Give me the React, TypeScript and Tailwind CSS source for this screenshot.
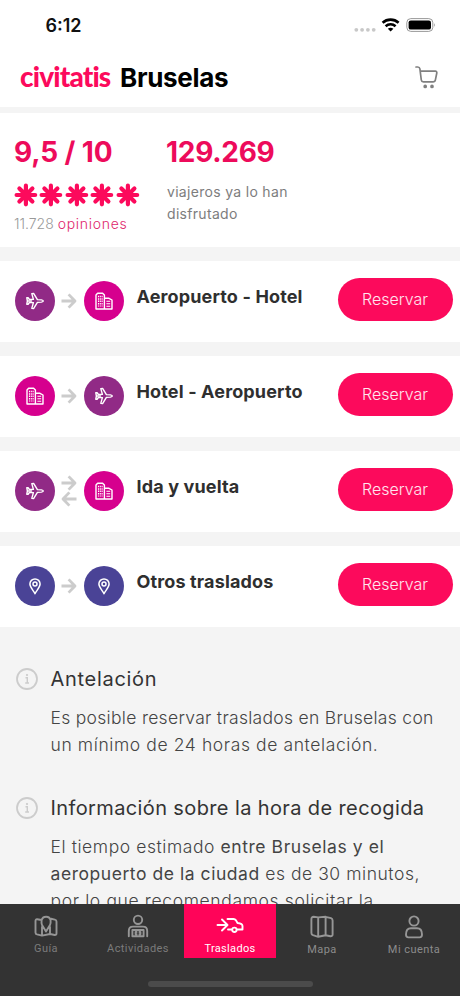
import React from "react";

type Stop = "airport" | "hotel" | "place";

interface Transfer {
  title: string;
  from: Stop;
  to: Stop;
  roundTrip?: boolean;
}

const TRANSFERS: Transfer[] = [
  { title: "Aeropuerto - Hotel", from: "airport", to: "hotel" },
  { title: "Hotel - Aeropuerto", from: "hotel", to: "airport" },
  { title: "Ida y vuelta", from: "airport", to: "hotel", roundTrip: true },
  { title: "Otros traslados", from: "place", to: "place" },
];

const STOP_COLORS: Record<Stop, string> = {
  airport: "bg-[#912a86]",
  hotel: "bg-[#d6008e]",
  place: "bg-[#4a4396]",
};

const PlaneIcon = () => (
  <svg className="h-5 w-5" viewBox="0 0 20 20" fill="none" stroke="white" strokeWidth="1.4" strokeLinejoin="round" strokeLinecap="round">
    <path d="M12.4 8.6 L16.4 8.9 Q18.3 9.3 18.3 10 Q18.3 10.7 16.4 11.1 L12.4 11.4 L8.6 17.6 L6.8 17.4 L8.4 11.6 L4.4 11.5 L3.1 13.2 L1.8 13.2 L2.4 10 L1.8 6.8 L3.1 6.8 L4.4 8.5 L8.4 8.4 L6.8 2.6 L8.6 2.4 Z" />
    <path d="M2.6 10 H6.5" />
  </svg>
);

const HotelIcon = () => (
  <svg className="h-5 w-5" viewBox="0 0 20 20" fill="none" stroke="white" strokeWidth="1.4" strokeLinejoin="round">
    <path d="M2 18 V4 L3.6 2.2 H8.6 L10.4 4 V18 Z M10.4 7.3 H15 L18 9 V18 H10.4" />
    <path d="M4.5 4.8 V15.5 M6.3 4.8 V15.5 M8.1 4.8 V15.5" strokeDasharray="1.5 0.9" strokeWidth="1.1" />
    <path d="M12.4 10.2 H16.2 M12.4 12.7 H16.2 M12.4 15.2 H16.2" strokeWidth="1.1" />
  </svg>
);

const PinIcon = () => (
  <svg className="h-5 w-5" viewBox="0 0 20 20" fill="none" stroke="white" strokeWidth="1.5" strokeLinejoin="round">
    <path d="M10 17.8 C8.4 14.4 4.9 11.4 4.9 8 A5.1 5.1 0 0 1 15.1 8 C15.1 11.4 11.6 14.4 10 17.8 Z" />
    <circle cx="10" cy="8" r="2" />
  </svg>
);

const StopBadge = ({ stop }: { stop: Stop }) => (
  <div className={`flex h-10 w-10 items-center justify-center rounded-full ${STOP_COLORS[stop]}`}>
    {stop === "airport" && <PlaneIcon />}
    {stop === "hotel" && <HotelIcon />}
    {stop === "place" && <PinIcon />}
  </div>
);

const Arrow = ({ back = false }: { back?: boolean }) => (
  <svg className={`h-4 w-4 ${back ? "rotate-180" : ""}`} viewBox="0 0 16 16" fill="none" stroke="#cccccc" strokeWidth="2.8">
    <path d="M0.5 8 H14 M7.6 1.4 L14 8 L7.6 14.6" strokeLinejoin="round" />
  </svg>
);

// Eight-petal rating mark
const Flower = () => (
  <svg className="h-6 w-[25.4px]" viewBox="0 0 25.4 24" stroke="#fc0a5c" strokeWidth="4.2" strokeLinecap="round">
    <path d="M11.9 2.7 V21.3 M2.6 12 H21.2 M5.4 5.5 L18.4 18.5 M18.4 5.5 L5.4 18.5" />
  </svg>
);

const CartIcon = () => (
  <svg className="h-6 w-6" viewBox="0 0 24 24" fill="none" stroke="#808080" strokeWidth="1.7" strokeLinecap="round" strokeLinejoin="round">
    <path d="M1 2 H2.8 Q4.6 2 4.9 3.8 L6.3 15 Q6.5 16.8 8.4 16.8 H18 Q20 16.8 20.4 14.8 L21.8 8 Q22 6.2 20.4 6.2 H5.4" />
    <circle cx="10.2" cy="21.4" r="1" fill="#808080" />
    <circle cx="17" cy="21.4" r="1" fill="#808080" />
  </svg>
);

const StatusBar = () => (
  <div className="flex h-[50px] items-center justify-between pr-6 pl-[45.5px]">
    <span className="text-[18px] font-semibold text-[#111]">6:12</span>
    <svg className="h-4 w-[82px]" viewBox="0 0 82 16">
      <g fill="#c8c8c8">
        <circle cx="2.3" cy="12.8" r="1.9" />
        <circle cx="8.1" cy="12.8" r="1.9" />
        <circle cx="13.9" cy="12.8" r="1.9" />
        <circle cx="19.7" cy="12.8" r="1.9" />
      </g>
      <g fill="none" stroke="black" strokeWidth="2.6">
        <path d="M28.6 5.7 A12 12 0 0 1 44.6 5.7" />
        <path d="M31.6 9.2 A7.6 7.6 0 0 1 41.6 9.2" />
      </g>
      <path d="M33.8 11.8 A4.4 4.4 0 0 1 39.4 11.8 L36.6 14.6 Z" fill="black" />
      <rect x="52.8" y="1.6" width="26" height="12.8" rx="4" fill="none" stroke="#999" />
      <rect x="54.6" y="3.4" width="22.4" height="9.2" rx="2.2" fill="black" />
      <path d="M80.2 6 Q82 8 80.2 10 Z" fill="#999" />
    </svg>
  </div>
);

const Header = () => (
  <header className="flex h-[57px] items-center justify-between pr-[21.5px] pb-[3px] pl-5">
    <h1 className="mb-[2px] flex items-baseline text-[26px] leading-none whitespace-nowrap">
      <span className="w-[100px] font-['Lato'] text-[28px] font-black tracking-[-0.03em] text-[#fc0a5c]">civitatis</span>
      <span className="font-bold tracking-[-0.012em] text-black">Bruselas</span>
    </h1>
    <CartIcon />
  </header>
);

const Stats = () => (
  <section className="flex h-[134px] bg-white px-[14px] pt-[22px]">
    <div className="w-[152px]">
      <div className="text-[28px] leading-[34px] font-bold tracking-[-0.005em] whitespace-nowrap text-[#ed0b5b]">9,5 / 10</div>
      <div className="mt-3.5 flex">
        {[0, 1, 2, 3, 4].map((i) => (
          <Flower key={i} />
        ))}
      </div>
      <div className="mt-1.5 text-[14px] leading-[22px] font-light whitespace-nowrap text-[#999]">
        11.728 <span className="tracking-[0.05em] text-[#e0266a]">opiniones</span>
      </div>
    </div>
    <div>
      <div className="text-[28px] leading-[34px] font-bold tracking-[-0.01em] whitespace-nowrap text-[#ed0b5b]">129.269</div>
      <p className="mt-3 ml-px w-[140px] text-[14px] leading-[22px] tracking-[0.022em] text-[#7d7d7d]">viajeros ya lo han disfrutado</p>
    </div>
  </section>
);

const TransferRow = ({ transfer }: { transfer: Transfer }) => (
  <div className="flex h-[81px] items-center bg-white pr-[7.5px] pb-[2px] pl-[14.5px]">
    <div className="flex items-center">
      <StopBadge stop={transfer.from} />
      <div className="flex w-[29px] flex-col items-center">
        <Arrow />
        {transfer.roundTrip && <Arrow back />}
      </div>
      <StopBadge stop={transfer.to} />
    </div>
    <h2 className="mb-[8px] ml-[13px] flex-1 text-[18px] font-bold tracking-[0.008em] whitespace-nowrap text-[#2f2f2f]">{transfer.title}</h2>
    <button className="mb-[2px] h-[43px] w-[115px] rounded-full bg-[#fc0a5c] pb-px text-[16px] font-light text-white/90">Reservar</button>
  </div>
);

const InfoIcon = () => (
  <svg className="h-[22px] w-[22px] shrink-0" viewBox="0 0 22 22" fill="none" stroke="#cccccc">
    <circle cx="11" cy="11" r="10" strokeWidth="1.8" />
    <path d="M9.5 9.7 H11.3 V14.8 M9.2 15 H13" strokeWidth="1.4" />
    <circle cx="11" cy="7" r="0.7" fill="#cccccc" />
  </svg>
);

const InfoBlock = ({ title, children }: { title: React.ReactNode; children: React.ReactNode }) => (
  <div className="flex gap-[13px] pl-[15.5px]">
    <InfoIcon />
    <div>
      <h3 className="text-[20px] leading-[22px] whitespace-nowrap text-[#333]">{title}</h3>
      <div className="mt-[14px] text-[17.5px] leading-[27px] font-light whitespace-nowrap text-[#444]">{children}</div>
    </div>
  </div>
);

const NAV_ICONS = {
  guide: (
    <path d="M7.6 6 L3.2 5.2 Q1.5 5 1.5 7 V18.4 Q1.5 20 3 20.4 L8 21.6 L16 20 L20.8 21 Q22.5 21 22.5 19.2 V7.4 Q22.5 6 20.8 5.6 L17 4.8 M8 13 V21.4 M16 13 V19.8 M8 11 L12 17.5 L16 11 C16.6 9.4 16.8 8 16.6 6.4 A4.6 4.6 0 0 0 7.6 6.4 C7.4 8 7.4 9.4 8 11 Z" />
  ),
  activities: (
    <path d="M12 1.6 A4.2 4.2 0 1 1 12 10 A4.2 4.2 0 1 1 12 1.6 Z M2.8 22.2 V17 Q2.8 12.6 7 12.6 H17 Q21.2 12.6 21.2 17 V22.2 M6.4 22.2 V16 H17.6 V22.2 Z M10.6 18 H9.6 V20.2 H10.6 M13.4 18 H14.4 V20.2 H13.4" />
  ),
  map: (
    <path d="M8.2 2.4 L3.6 1.8 Q1.4 1.8 1.4 4 V18 Q1.4 19.6 3 20.2 L8.2 21.8 L15.6 20.2 L20.4 21.2 Q22.6 21.4 22.6 19.4 V5.4 Q22.6 3.8 21 3.2 L15.6 1.8 Z M8.2 2.4 V21.8 M15.6 1.8 V20.2" />
  ),
  account: (
    <path d="M12 1.4 A4.6 4.6 0 1 1 12 10.6 A4.6 4.6 0 1 1 12 1.4 Z M4 19.6 Q4 13.2 9 13.2 H15 Q20 13.2 20 19.6 Q20 22.4 17.6 22.4 H6.4 Q4 22.4 4 19.6 Z" />
  ),
};

const NavItem = ({ label, icon, low = false }: { label: string; icon: React.ReactNode; low?: boolean }) => (
  <div className={`flex h-[55px] flex-1 flex-col items-center text-[#969696] ${low ? "pt-[11px]" : "pt-[10px]"}`}>
    <svg className="h-6 w-6" viewBox="0 0 24 24" fill="none" stroke="currentColor" strokeWidth="1.9" strokeLinejoin="round" strokeLinecap="round">
      {icon}
    </svg>
    <span className={`mt-[3px] text-[11px] leading-[16px] tracking-[0.04em] whitespace-nowrap ${low ? "text-[#8c8c8c]" : "text-[#7b7b7b]"}`}>{label}</span>
  </div>
);

const BottomNav = () => (
  <nav className="absolute inset-x-0 bottom-0 h-[92px] bg-[#333333] font-['Roboto',sans-serif]">
    <div className="flex">
      <NavItem label="Guía" icon={NAV_ICONS.guide} />
      <NavItem label="Actividades" icon={NAV_ICONS.activities} />
      <div className="flex h-[54px] flex-1 flex-col items-center bg-[#ff0459] pt-[10px] text-white">
        <svg className="h-6 w-7" viewBox="0 0 28 24" fill="none" stroke="currentColor" strokeWidth="1.9" strokeLinejoin="round" strokeLinecap="round">
          <path d="M1.5 11 H10 M6 5.5 L11.5 11 L6 16.5 M11.5 5 H17.5 Q19 5 20 6.4 L21.5 9 Q26.5 9.6 26.5 12 V15.5 H21.4 M15.5 15.5 H12" />
          <circle cx="18.4" cy="15.8" r="2.2" />
        </svg>
        <span className="mt-[3px] text-[11px] leading-[16px] tracking-[0.03em]">Traslados</span>
      </div>
      <NavItem label="Mapa" icon={NAV_ICONS.map} low />
      <NavItem label="Mi cuenta" icon={NAV_ICONS.account} low />
    </div>
    <div className="mx-auto mt-[22px] h-[6px] w-[165px] rounded-full bg-[#4b4b4b]" />
  </nav>
);

export default function App() {
  return (
    <div className="relative h-[996px] w-[460px] overflow-hidden bg-[#f4f4f4] font-['Inter',sans-serif]">
      <div className="bg-white">
        <StatusBar />
        <Header />
      </div>
      <main className="flex flex-col gap-[14px] pt-[6px]">
        <Stats />
        {TRANSFERS.map((transfer) => (
          <TransferRow key={transfer.title} transfer={transfer} />
        ))}
        <div className="flex flex-col gap-[39px] pt-[27px]">
          <InfoBlock title={<span className="tracking-[0.035em]">Antelación</span>}>
            <p className="tracking-[0.3px]">Es posible reservar traslados en Bruselas con</p>
            <p className="tracking-[0.6px]">un mínimo de 24 horas de antelación.</p>
          </InfoBlock>
          <InfoBlock title={<span className="tracking-[0.019em]">Información sobre la hora de recogida</span>}>
            <p className="tracking-[0.57px]">
              El tiempo estimado <span className="font-normal">entre Bruselas y el</span>
            </p>
            <p className="tracking-[0.55px]">
              <span className="font-normal">aeropuerto de la ciudad</span> es de 30 minutos,
            </p>
            <p className="tracking-[0.63px]">por lo que recomendamos solicitar la</p>
          </InfoBlock>
        </div>
      </main>
      <BottomNav />
    </div>
  );
}
